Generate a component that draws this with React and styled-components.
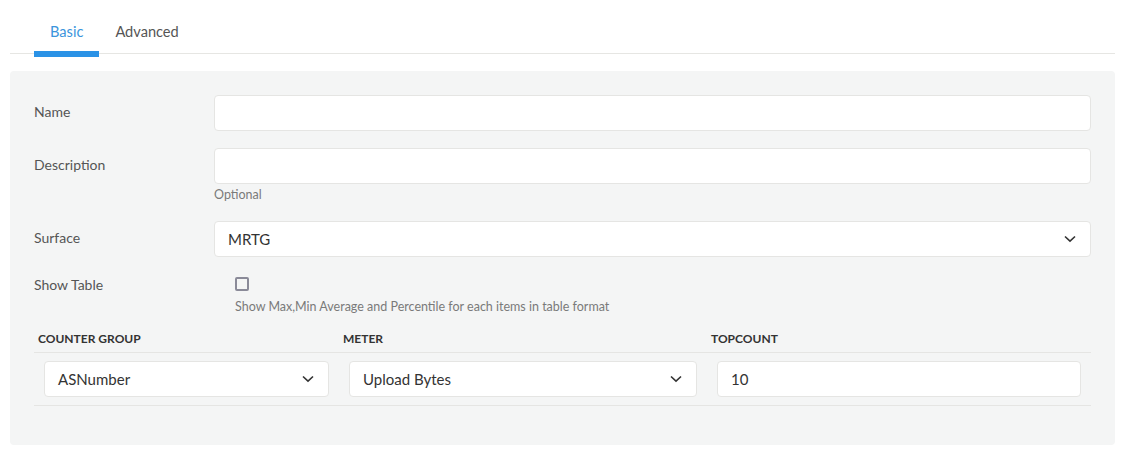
import styled, { createGlobalStyle } from 'styled-components';

const GlobalStyle = createGlobalStyle`
  body {
    margin: 0;
    background: #ffffff;
    font-family: Lato, "Noto Sans", sans-serif;
    color: #4a4a4a;
  }
`;

const Page = styled.div`
  padding: 0 11px 0 10px;
`;

const TabNav = styled.div`
  display: flex;
  padding-left: 24px;
  height: 54px;
  border-bottom: 1px solid #e6e6e3;
  box-sizing: border-box;
`;

const Tab = styled.div`
  position: relative;
  padding: 0 16px;
  font-size: 14.6px;
  line-height: 1;
  padding-top: 25px;
  color: ${(p) => (p.active ? '#3b95dc' : '#555555')};

  &::after {
    content: '';
    display: ${(p) => (p.active ? 'block' : 'none')};
    position: absolute;
    left: 0;
    right: 0;
    top: 51px;
    height: 6px;
    background: #2a92e6;
  }
`;

const Panel = styled.div`
  margin-top: 17px;
  background: #f4f5f5;
  border-radius: 4px;
  padding: 24px 24px 40px 24px;
  height: 374px;
  box-sizing: border-box;
`;

const FieldRow = styled.div`
  display: grid;
  grid-template-columns: 180px 1fr;
  margin-bottom: ${(p) => p.gap ?? 17}px;
`;

const Label = styled.div`
  font-size: 14px;
  color: #555555;
  padding-top: ${(p) => p.top ?? 8}px;
`;

const Input = styled.div`
  height: 36px;
  box-sizing: border-box;
  background: #ffffff;
  border: 1px solid #e5e5e3;
  border-radius: 4px;
  display: flex;
  align-items: center;
  justify-content: space-between;
  padding: 0 14px 0 13px;
  font-size: 15px;
  color: #333333;
`;

const Hint = styled.div`
  font-size: 12.5px;
  color: #7a7a7a;
  margin-top: ${(p) => p.top ?? 3}px;
`;

const CheckCell = styled.div`
  padding-left: 21px;
  padding-top: 7px;
`;

const Checkbox = styled.div`
  width: 14px;
  height: 14px;
  box-sizing: border-box;
  border: 2px solid #8a8a98;
  border-radius: 2px;
`;

const Table = styled.div`
  margin-top: 13px;
`;

const TableRow = styled.div`
  display: grid;
  grid-template-columns: 305px 368px 1fr;
  border-bottom: 1px solid #e5e5e3;
`;

const HeadCell = styled.div`
  font-size: 12px;
  font-weight: 700;
  color: #333333;
  padding: 4px 4px 6px 4px;
`;

const Cell = styled.div`
  padding: 8px 10px;
`;

const Chevron = () => (
  <svg width="12" height="8" viewBox="0 0 12 8" fill="none">
    <path d="M1 1.5 L6 6.2 L11 1.5" stroke="#333" strokeWidth="1.6" />
  </svg>
);

const App = () => {
  return (
    <Page>
      <GlobalStyle />
      <TabNav>
        <Tab active>Basic</Tab>
        <Tab>Advanced</Tab>
      </TabNav>
      <Panel>
        <FieldRow>
          <Label>Name</Label>
          <Input />
        </FieldRow>
        <FieldRow gap={19}>
          <Label>Description</Label>
          <div>
            <Input />
            <Hint>Optional</Hint>
          </div>
        </FieldRow>
        <FieldRow gap={13}>
          <Label>Surface</Label>
          <Input>
            MRTG
            <Chevron />
          </Input>
        </FieldRow>
        <FieldRow gap={0}>
          <Label top={6}>Show Table</Label>
          <CheckCell>
            <Checkbox />
            <Hint top={8}>Show Max,Min Average and Percentile for each items in table format</Hint>
          </CheckCell>
        </FieldRow>
        <Table>
          <TableRow>
            <HeadCell>COUNTER GROUP</HeadCell>
            <HeadCell>METER</HeadCell>
            <HeadCell>TOPCOUNT</HeadCell>
          </TableRow>
          <TableRow>
            <Cell>
              <Input>
                ASNumber
                <Chevron />
              </Input>
            </Cell>
            <Cell>
              <Input>
                Upload Bytes
                <Chevron />
              </Input>
            </Cell>
            <Cell>
              <Input>10</Input>
            </Cell>
          </TableRow>
        </Table>
      </Panel>
    </Page>
  );
};

export default App;
